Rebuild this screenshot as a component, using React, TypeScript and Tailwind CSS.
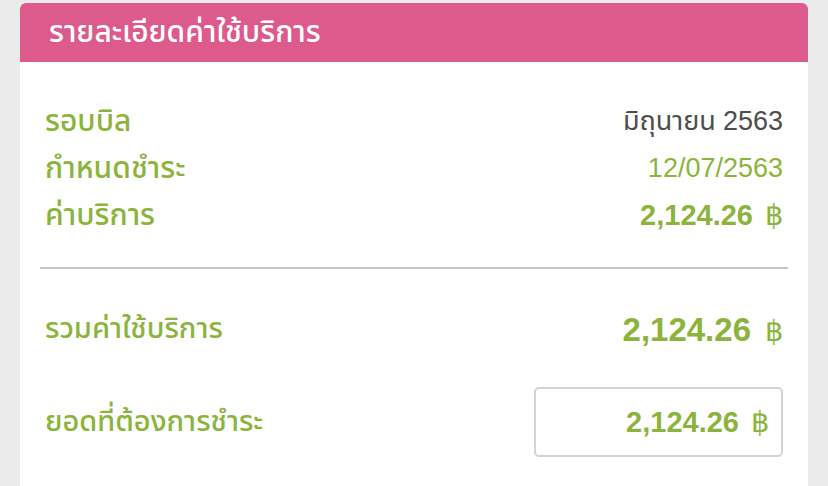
import React from 'react';

const thai = { fontFamily: '"Noto Sans Thai", "Noto Sans", "DejaVu Sans", sans-serif' };
const num = { fontFamily: '"Liberation Sans", Arial, sans-serif' };

const rows = [
  { label: 'รอบบิล', value: 'มิถุนายน 2563', kind: 'month' },
  { label: 'กำหนดชำระ', value: '12/07/2563', kind: 'date' },
  { label: 'ค่าบริการ', value: '2,124.26', kind: 'amount' },
];

export default function App() {
  return (
    <div className="w-[828px] h-[486px] bg-[#ebebeb] overflow-hidden pt-[3px] px-[20px]">
      <div className="bg-white h-full rounded-t-[6px] overflow-hidden">
        <div className="h-[59px] bg-[#dc5a8c] flex items-center pl-[29px]">
          <h1 className="text-white text-[30px] font-medium leading-none" style={thai}>
            รายละเอียดค่าใช้บริการ
          </h1>
        </div>

        <div className="px-[25px] pt-[36px] flex flex-col">
          {rows.map((row) => (
            <div key={row.label} className="flex items-center justify-between h-[47px]">
              <span className="text-[#8cb43c] text-[30px] font-medium leading-none" style={thai}>
                {row.label}
              </span>
              {row.kind === 'month' && (
                <span className="text-[#4d4d4d] text-[27px] leading-none" style={thai}>
                  มิถุนายน <span style={num}>2563</span>
                </span>
              )}
              {row.kind === 'date' && (
                <span className="text-[#8cb43c] text-[27px] leading-none" style={num}>
                  {row.value}
                </span>
              )}
              {row.kind === 'amount' && (
                <span className="text-[#8cb43c] text-[29px] font-bold leading-none" style={num}>
                  {row.value}
                  <span className="ml-[12px] font-normal">฿</span>
                </span>
              )}
            </div>
          ))}
        </div>

        <div className="mx-[20px] mt-[28px] h-[2px] bg-[#c4c4c4]" />

        <div className="px-[25px] flex flex-col">
          <div className="flex items-center justify-between h-[118px] pt-[2px]">
            <span className="text-[#8cb43c] text-[29px] font-medium leading-none" style={thai}>
              รวมค่าใช้บริการ
            </span>
            <span className="text-[#8cb43c] text-[33px] font-bold leading-none" style={num}>
              2,124.26
              <span className="ml-[14px] font-normal text-[29px]">฿</span>
            </span>
          </div>
          <div className="flex items-center justify-between">
            <span className="text-[#8cb43c] text-[29px] font-medium leading-none" style={thai}>
              ยอดที่ต้องการชำระ
            </span>
            <div className="w-[249px] h-[70px] border-2 border-[#d4d4d4] rounded-[5px] flex items-center justify-end pr-[12px]">
              <span className="text-[#8cb43c] text-[29px] font-bold leading-none" style={num}>
                2,124.26
                <span className="ml-[12px] font-normal">฿</span>
              </span>
            </div>
          </div>
        </div>
      </div>
    </div>
  );
}
